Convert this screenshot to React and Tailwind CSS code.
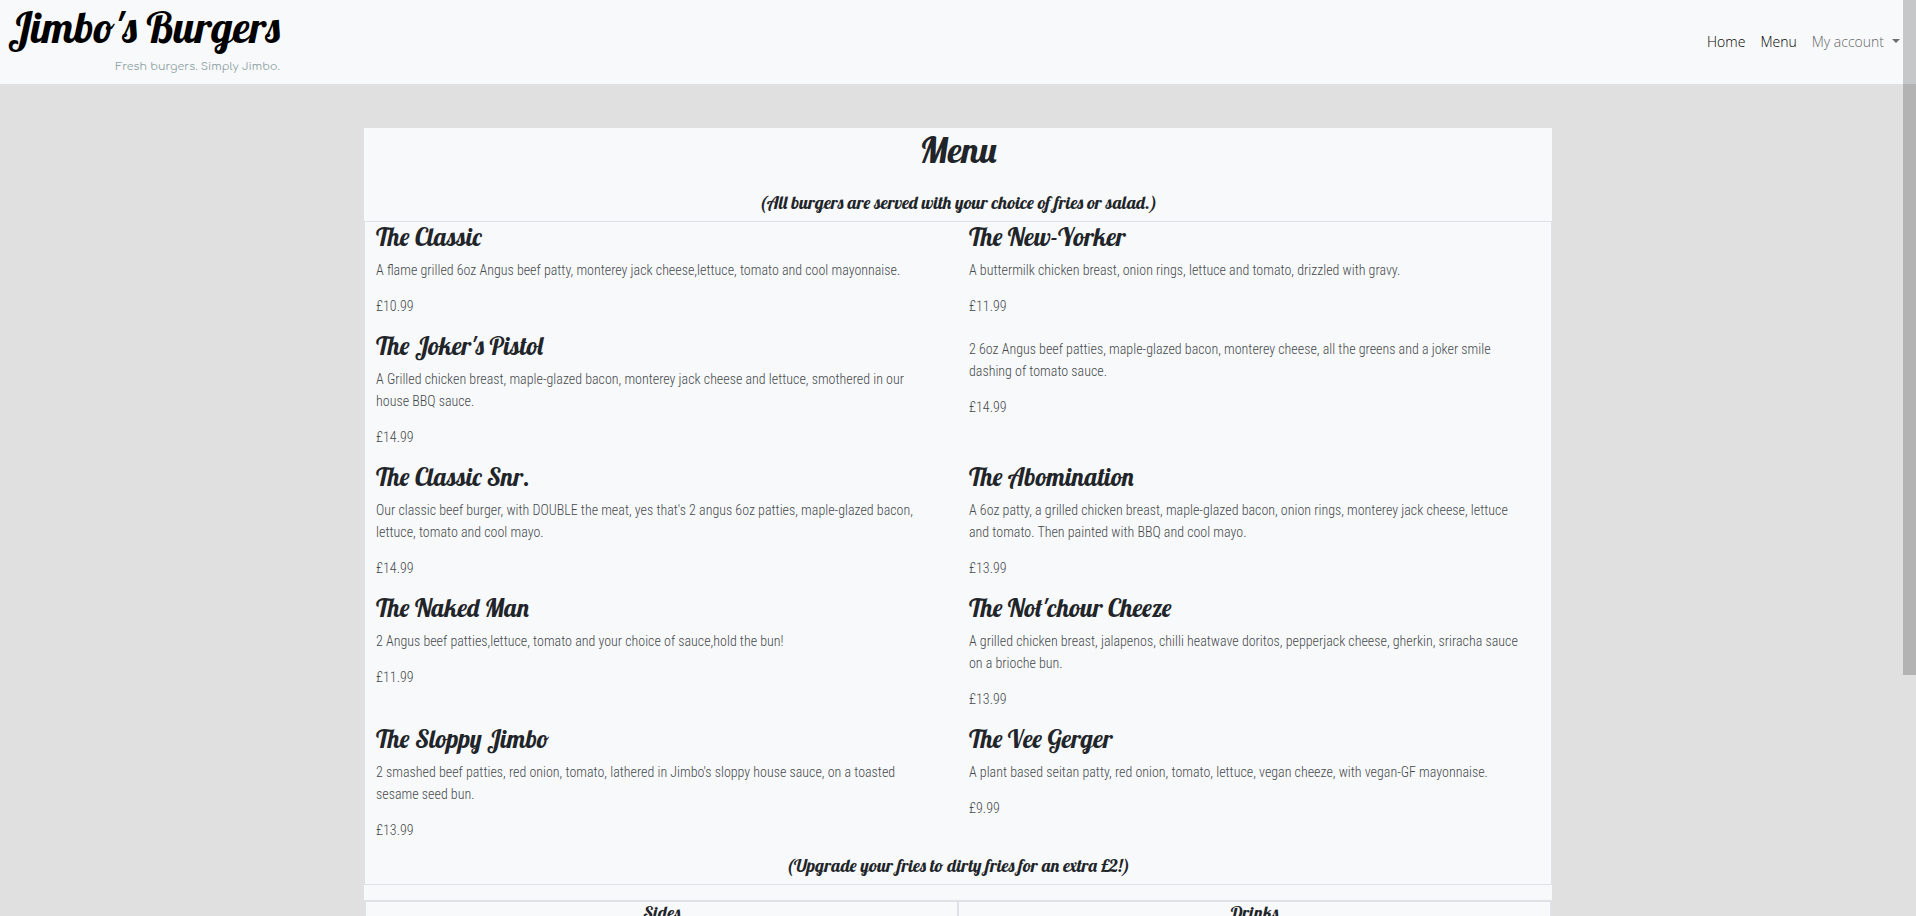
const burgers = [
  {
    name: "The Classic",
    text: "A flame grilled 6oz Angus beef patty, monterey jack cheese,lettuce, tomato and cool mayonnaise.",
    price: "£10.99",
  },
  {
    name: "The New-Yorker",
    text: "A buttermilk chicken breast, onion rings, lettuce and tomato, drizzled with gravy.",
    price: "£11.99",
  },
  {
    name: "The Joker's Pistol",
    text: "A Grilled chicken breast, maple-glazed bacon, monterey jack cheese and lettuce, smothered in our house BBQ sauce.",
    price: "£14.99",
  },
  {
    name: "",
    text: "2 6oz Angus beef patties, maple-glazed bacon, monterey cheese, all the greens and a joker smile dashing of tomato sauce.",
    price: "£14.99",
  },
  {
    name: "The Classic Snr.",
    text: "Our classic beef burger, with DOUBLE the meat, yes that's 2 angus 6oz patties, maple-glazed bacon, lettuce, tomato and cool mayo.",
    price: "£14.99",
  },
  {
    name: "The Abomination",
    text: "A 6oz patty, a grilled chicken breast, maple-glazed bacon, onion rings, monterey jack cheese, lettuce and tomato. Then painted with BBQ and cool mayo.",
    price: "£13.99",
  },
  {
    name: "The Naked Man",
    text: "2 Angus beef patties,lettuce, tomato and your choice of sauce,hold the bun!",
    price: "£11.99",
  },
  {
    name: "The Not'chour Cheeze",
    text: "A grilled chicken breast, jalapenos, chilli heatwave doritos, pepperjack cheese, gherkin, sriracha sauce on a brioche bun.",
    price: "£13.99",
  },
  {
    name: "The Sloppy Jimbo",
    text: "2 smashed beef patties, red onion, tomato, lathered in Jimbo's sloppy house sauce, on a toasted sesame seed bun.",
    price: "£13.99",
  },
  {
    name: "The Vee Gerger",
    text: "A plant based seitan patty, red onion, tomato, lettuce, vegan cheeze, with vegan-GF mayonnaise.",
    price: "£9.99",
  },
];

function Header() {
  return (
    <header className="flex h-[84px] items-start justify-between bg-[#f8f9fa] pl-2 pr-4">
      <a href="#home" className="flex flex-col items-end">
        <span className="font-['Lobster','Liberation_Serif',serif] text-[43px] leading-[54px] text-black">
          Jimbo's Burgers
        </span>
        <span className="font-['Comfortaa','Lato',sans-serif] text-[11px] leading-[26px] text-[#8fa3a6]">
          Fresh burgers. Simply Jimbo.
        </span>
      </a>
      <nav className="flex h-[82px] items-center gap-[15px] font-['Open_Sans',sans-serif] text-[14px] font-light text-black">
        <a href="#home">Home</a>
        <a href="#menu">Menu</a>
        <button type="button" className="flex items-center gap-2 text-[#66686a]">
          My account
          <svg width="8" height="4" viewBox="0 0 8 4" aria-hidden="true">
            <path d="M0 0h8L4 4z" fill="#6c6d6e" />
          </svg>
        </button>
      </nav>
    </header>
  );
}

function Burger({ name, text, price }) {
  return (
    <article className="pl-[11px] pr-6">
      <h3 className="mb-[7px] font-['Lobster','Liberation_Serif',serif] text-[25px] leading-[30px]">
        {name}
      </h3>
      <div className="font-['Roboto_Condensed','Liberation_Sans_Narrow','Roboto',sans-serif] text-[14px] font-light leading-[22px] text-[#45494d]">
        <p className="mb-[14px]">{text}</p>
        <p className="mb-[14px]">{price}</p>
      </div>
    </article>
  );
}

export default function App() {
  return (
    <div className="h-screen overflow-hidden bg-[#e0e0e0] text-[#212529]">
      <Header />
      <main className="mx-auto mt-11 w-[62%] bg-[#f8f9fa]">
        <div className="text-center font-['Lobster','Liberation_Serif',serif]">
          <h1 className="mb-[21px] text-[36px] leading-[43px]">Menu</h1>
          <h2 className="pb-[7px] text-[18px] leading-[22px]">
            (All burgers are served with your choice of fries or salad.)
          </h2>
        </div>
        <section className="mb-[15px] border border-[#dee2e6]">
          <div className="grid grid-cols-2">
            {burgers.map((b) => (
              <Burger key={b.text} {...b} />
            ))}
          </div>
          <h2 className="pb-[7px] text-center font-['Lobster','Liberation_Serif',serif] text-[18px] leading-[22px]">
            (Upgrade your fries to dirty fries for an extra £2!)
          </h2>
        </section>
        <table className="w-full table-fixed border-collapse font-['Lobster','Liberation_Serif',serif] text-[18px] leading-[22px]">
          <thead>
            <tr>
              <th className="border-2 border-[#dee2e6] pb-2 font-normal">Sides</th>
              <th className="border-2 border-[#dee2e6] pb-2 font-normal">Drinks</th>
            </tr>
          </thead>
        </table>
      </main>
      <div className="fixed right-0 top-0 h-[675px] w-[13px] bg-black/20" aria-hidden="true" />
    </div>
  );
}
